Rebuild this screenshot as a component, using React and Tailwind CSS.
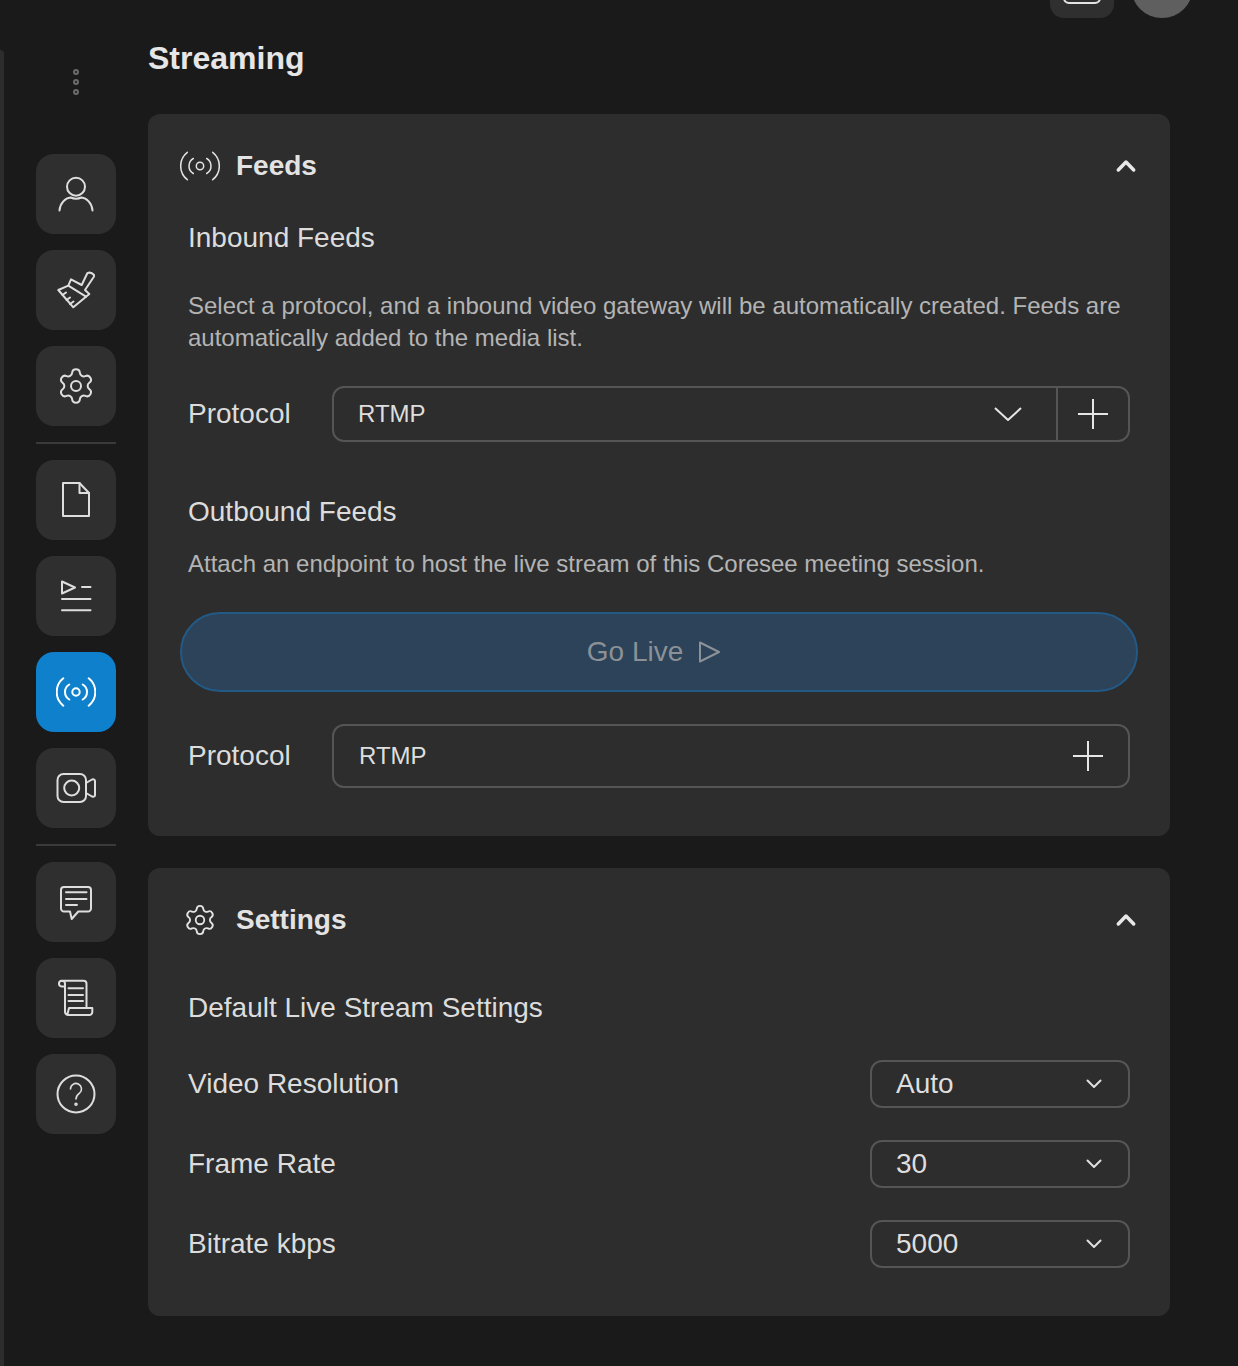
import { Settings } from "lucide-react";

const Icon = ({ children, strokeWidth = 2 }) => (
  <svg
    viewBox="0 0 40 40"
    width={40}
    height={40}
    fill="none"
    stroke="currentColor"
    strokeWidth={strokeWidth}
    strokeLinecap="round"
    strokeLinejoin="round"
  >
    {children}
  </svg>
);

const UserIcon = () => (
  <Icon>
    <circle cx="20" cy="12.7" r="9" />
    <path d="M3.5 36.5C4 29 9.5 24 14.5 23.5c3.5 1.5 7.5 1.5 11 0C30.5 24 36 29 36.5 36.5" />
  </Icon>
);

const BrushIcon = () => (
  <Icon>
    <path d="M2.3 20 12.3 15.7 15 9.3 25.7 15 31.3 3.2Q35 1.5 38 5 38.5 7 37 8L29 20 33.3 24 30 26.7 17.3 37.3Z" />
    <path d="M12.3 15.7 30 26.7" />
    <path d="M6.5 25 10 22.5M10.5 30 14 27.5M14 34 17.5 31.5" />
  </Icon>
);

const FileIcon = () => (
  <Icon>
    <path d="M7 3H23.5L33 13V36H7Z" />
    <path d="M23.5 3V13H33" />
  </Icon>
);

const PlaylistIcon = () => (
  <Icon>
    <path d="M6 5.5 19 11.5 6 17.5Z" />
    <path d="M26 11H34.5M6 23H34.5M6 34.3H34.5" />
  </Icon>
);

const RadioIcon = ({ strokeWidth = 2 }) => (
  <Icon strokeWidth={strokeWidth}>
    <circle cx="20" cy="20" r="3.7" />
    <path d="M13.3 12.5A8.7 8.7 0 0 0 13.3 27.5" />
    <path d="M26.7 12.5A8.7 8.7 0 0 1 26.7 27.5" />
    <path d="M7.3 6.3A17.5 17.5 0 0 0 7.3 33.7" />
    <path d="M32.7 6.3A17.5 17.5 0 0 1 32.7 33.7" />
  </Icon>
);

const CameraIcon = () => (
  <Icon>
    <rect x="1.5" y="6" width="28.5" height="28" rx="6" />
    <circle cx="15.7" cy="20" r="7.5" />
    <path d="M30 15 36 11.5Q39 10.8 39 13V27Q39 29.2 36 28.5L30 25" />
  </Icon>
);

const ChatIcon = () => (
  <Icon>
    <path d="M8 5H32a3 3 0 0 1 3 3V26.5a3 3 0 0 1-3 3H22.3L15.7 37 14 29.5H8a3 3 0 0 1-3-3V8a3 3 0 0 1 3-3Z" />
    <path d="M10 10.3H30.5M10 17H30.5M10 23H21" />
  </Icon>
);

const ScrollIcon = () => (
  <Icon>
    <path d="M6 2.7H27.5a3 3 0 0 1 3 3V30" />
    <path d="M9 8.4H5.7A2.8 2.8 0 0 1 6 2.7a3 3 0 0 1 3 3V33.5a3.5 3.5 0 0 0 3 3.5H33a3 3 0 0 0 3.3-3V30H13L11.5 36" />
    <path d="M12.5 10.3H27M12.5 17H27M12.5 23H27" />
  </Icon>
);

const HelpIcon = () => (
  <Icon>
    <circle cx="20" cy="20" r="18.5" />
    <path d="M14.5 15a5.5 5.5 0 1 1 9 4.2c-2 1.5-3.5 2.6-3.5 5.8" strokeWidth={1.6} />
    <circle cx="20" cy="30.2" r="0.8" />
  </Icon>
);

const NavButton = ({ active, children }) => (
  <button
    type="button"
    className={
      active
        ? "w-20 h-20 rounded-[18px] flex items-center justify-center bg-[#0e80cc] text-white"
        : "w-20 h-20 rounded-[18px] flex items-center justify-center bg-[#2f2f2f] text-[#dedede]"
    }
  >
    {children}
  </button>
);

const Divider = () => <div className="h-[2px] bg-[#3a3a3a]" />;

const Sidebar = () => (
  <aside className="w-20 ml-8 shrink-0 pt-[51px]">
    <div className="flex flex-col items-center gap-1 mb-[59px]">
      <div className="w-[6px] h-[6px] rounded-full border-2 border-[#6a6a6a]" />
      <div className="w-[6px] h-[6px] rounded-full border-2 border-[#6a6a6a]" />
      <div className="w-[6px] h-[6px] rounded-full border-2 border-[#6a6a6a]" />
    </div>
    <div className="flex flex-col gap-4">
      <NavButton><UserIcon /></NavButton>
      <NavButton><BrushIcon /></NavButton>
      <NavButton><Settings size={40} strokeWidth={1.2} /></NavButton>
      <Divider />
      <NavButton><FileIcon /></NavButton>
      <NavButton><PlaylistIcon /></NavButton>
      <NavButton active><RadioIcon /></NavButton>
      <NavButton><CameraIcon /></NavButton>
      <Divider />
      <NavButton><ChatIcon /></NavButton>
      <NavButton><ScrollIcon /></NavButton>
      <NavButton><HelpIcon /></NavButton>
    </div>
  </aside>
);

const CardHeader = ({ icon, title }) => (
  <div className="h-[104px] flex items-center justify-between">
    <div className="flex items-center gap-4 text-[#e3e3e3]">
      <span className="w-10 h-10 flex items-center justify-center">{icon}</span>
      <h2 className="text-[28px] font-bold leading-10">{title}</h2>
    </div>
    <svg viewBox="0 0 24 24" width={24} height={24} fill="none" stroke="#e8e8e8" strokeWidth={3.5} strokeLinecap="round" strokeLinejoin="round">
      <path d="M4.3 16 12 8 19.7 16" />
    </svg>
  </div>
);

const PlusIcon = () => (
  <svg viewBox="0 0 30 30" width={30} height={30} fill="none" stroke="#e6e6e6" strokeWidth={2}>
    <path d="M15 0V30M0 15H30" />
  </svg>
);

const SmallSelect = ({ value }) => (
  <div className="w-[260px] h-12 rounded-xl border-2 border-[#555555] flex items-center justify-between pl-6 pr-[26px] text-[28px] text-[#dedede]">
    <span>{value}</span>
    <svg viewBox="0 0 16 10" width={16} height={10} fill="none" stroke="#e0e0e0" strokeWidth={2} strokeLinecap="round" strokeLinejoin="round">
      <path d="M1.5 1.5 8 8 14.5 1.5" />
    </svg>
  </div>
);

const SettingRow = ({ label, value }) => (
  <div className="flex items-center justify-between">
    <span className="text-[28px] text-[#dcdcdc]">{label}</span>
    <SmallSelect value={value} />
  </div>
);

const FeedsCard = () => (
  <section className="bg-[#2d2d2d] rounded-xl px-8 pb-12">
    <CardHeader icon={<RadioIcon strokeWidth={1.5} />} title="Feeds" />
    <div className="px-2">
      <h3 className="text-[28px] leading-10 text-[#dcdcdc]">Inbound Feeds</h3>
      <p className="mt-8 text-2xl leading-8 text-[#b4b4b4]">
        Select a protocol, and a inbound video gateway will be automatically created. Feeds are automatically added to the media list.
      </p>
      <div className="mt-8 flex items-center">
        <label className="w-36 text-[28px] text-[#dcdcdc]">Protocol</label>
        <div className="flex-1 h-14 rounded-xl border-2 border-[#555555] flex items-center text-2xl text-[#dedede]">
          <span className="flex-1 pl-6">RTMP</span>
          <svg className="mr-[34px]" viewBox="0 0 28 14" width={28} height={14} fill="none" stroke="#e6e6e6" strokeWidth={2}>
            <path d="M1 1 14 13 27 1" />
          </svg>
          <div className="w-[72px] h-full border-l-2 border-[#555555] flex items-center justify-center">
            <PlusIcon />
          </div>
        </div>
      </div>
      <h3 className="mt-[50px] text-[28px] leading-10 text-[#dcdcdc]">Outbound Feeds</h3>
      <p className="mt-4 text-2xl leading-8 text-[#b4b4b4]">
        Attach an endpoint to host the live stream of this Coresee meeting session.
      </p>
    </div>
    <button
      type="button"
      className="mt-8 w-full h-20 rounded-full bg-[#2c4359] border-2 border-[#235a85] flex items-center justify-center gap-[15px] pr-[11px] text-[28px] text-[#8b9196]"
    >
      Go Live
      <svg viewBox="0 0 22 22" width={22} height={22} fill="none" stroke="#8b9196" strokeWidth={2} strokeLinejoin="round">
        <path d="M2 1.5 21 11 2 20.5Z" />
      </svg>
    </button>
    <div className="mt-8 px-2 flex items-center">
      <label className="w-36 text-[28px] text-[#dcdcdc]">Protocol</label>
      <div className="flex-1 h-16 rounded-xl border-2 border-[#555555] flex items-center justify-between pl-[25px] pr-[25px] text-2xl text-[#dedede]">
        <span>RTMP</span>
        <PlusIcon />
      </div>
    </div>
  </section>
);

const SettingsCard = () => (
  <section className="bg-[#2d2d2d] rounded-xl px-8 pb-12">
    <CardHeader icon={<Settings size={34} strokeWidth={1.3} />} title="Settings" />
    <div className="px-2">
      <h3 className="mt-4 text-[28px] leading-10 text-[#dcdcdc]">Default Live Stream Settings</h3>
      <div className="mt-8 flex flex-col gap-8">
        <SettingRow label="Video Resolution" value="Auto" />
        <SettingRow label="Frame Rate" value="30" />
        <SettingRow label="Bitrate kbps" value="5000" />
      </div>
    </div>
  </section>
);

const App = () => {
  return (
    <div className="w-[1238px] h-[1366px] overflow-hidden bg-[#1a1a1a] font-['Liberation_Sans',sans-serif]">
      <header className="h-[18px] overflow-hidden flex items-end justify-end gap-[17px] pr-[45px]">
        <div className="w-16 h-16 shrink-0 rounded-[14px] bg-[#2f2f2f] flex items-end justify-center pb-[14px]">
          <div className="w-[38px] h-6 rounded-md border-2 border-[#e4e4e4]" />
        </div>
        <div className="w-[62px] h-[62px] shrink-0 rounded-full bg-[#5f5f5f]" />
      </header>
      <div className="flex">
        <div className="w-1 h-[1348px] mt-8 shrink-0 rounded-tr-lg bg-[#2d2d2d]" />
        <Sidebar />
        <main className="w-[1022px] ml-8 pt-5">
          <h1 className="text-[32px] font-bold leading-10 text-[#e6e6e6] mb-9">Streaming</h1>
          <div className="flex flex-col gap-8">
            <FeedsCard />
            <SettingsCard />
          </div>
        </main>
      </div>
    </div>
  );
};

export default App;
